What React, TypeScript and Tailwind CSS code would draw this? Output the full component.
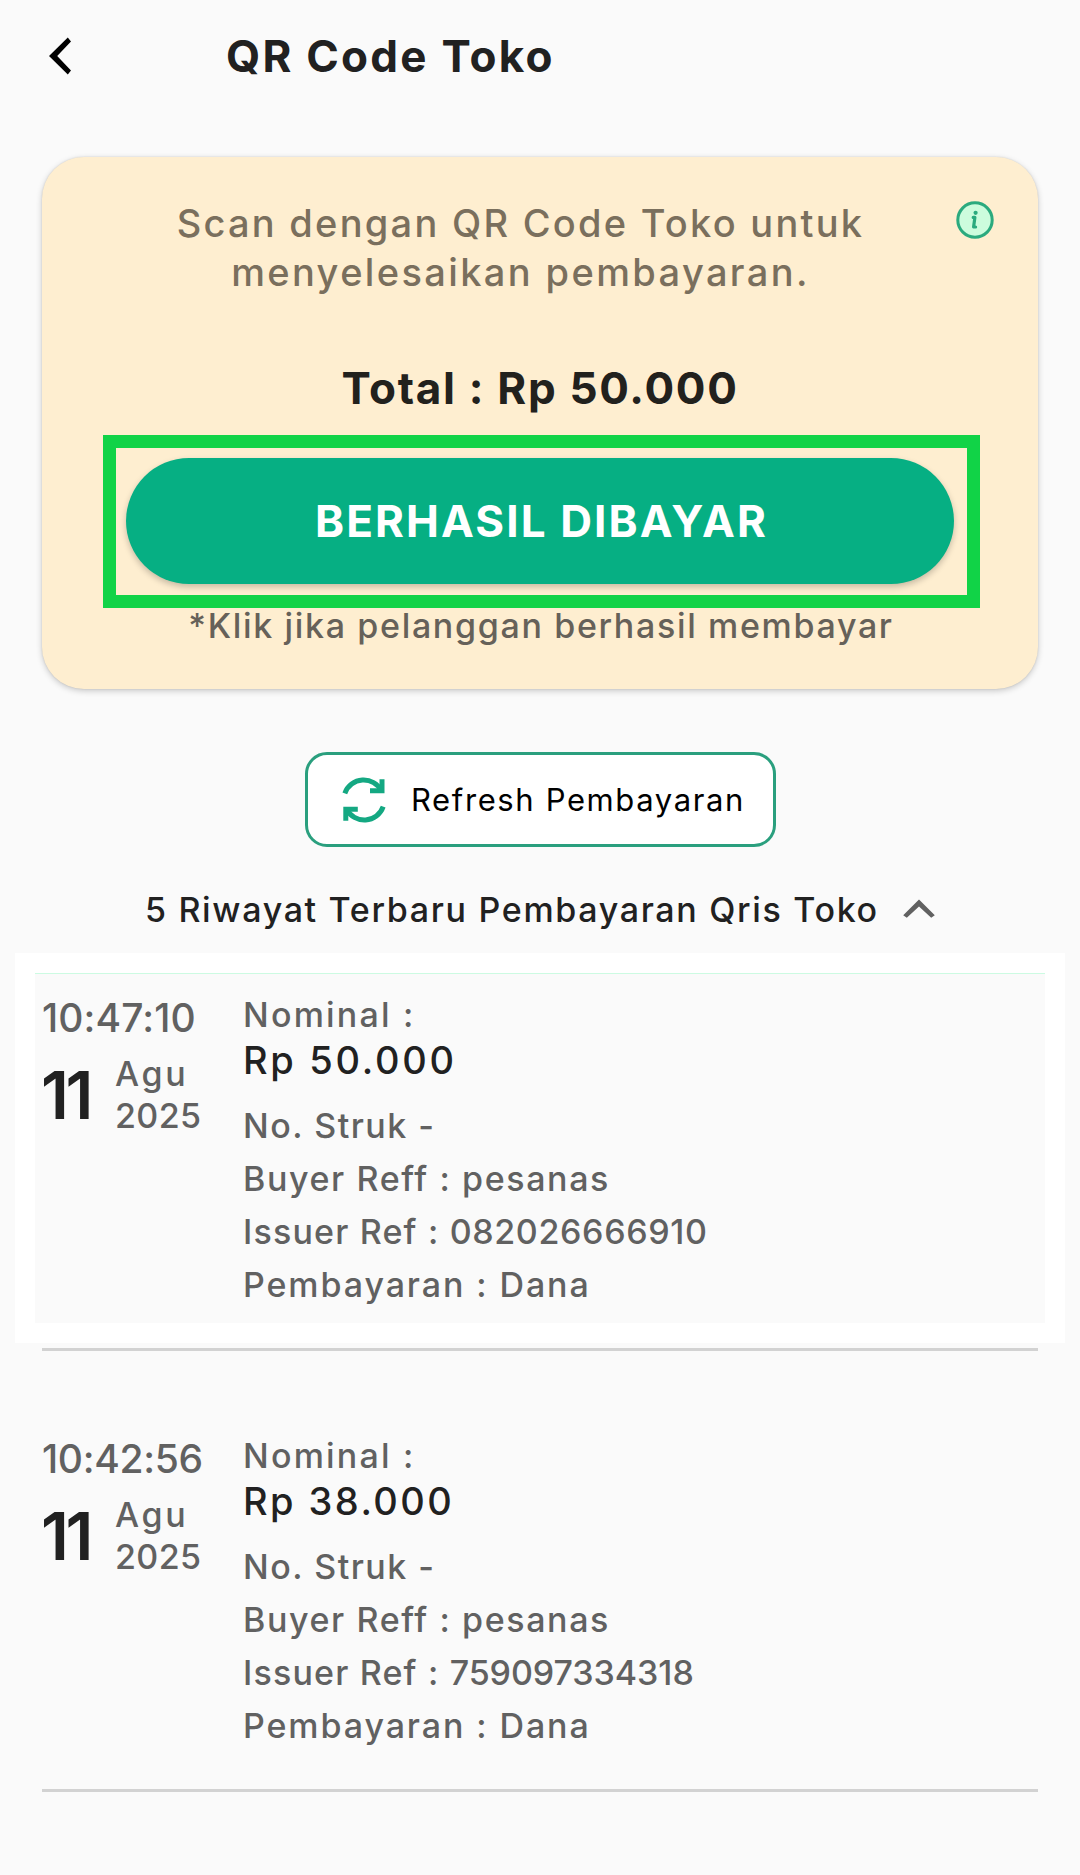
type Payment = {
  time: string;
  timeClass: string;
  amount: string;
  amountClass: string;
  issuer: string;
  issuerClass: string;
};

const payments: Payment[] = [
  {
    time: "10:47:10",
    timeClass: "tracking-[0.1px]",
    amount: "Rp 50.000",
    amountClass: "tracking-[2.7px]",
    issuer: "082026666910",
    issuerClass: "tracking-[0.64px]",
  },
  {
    time: "10:42:56",
    timeClass: "tracking-[-0.32px]",
    amount: "Rp 38.000",
    amountClass: "tracking-[2.45px]",
    issuer: "759097334318",
    issuerClass: "tracking-[-0.06px]",
  },
];

function BackIcon() {
  return (
    <svg width="22" height="38" viewBox="0 0 22 38" fill="#000">
      <path d="M0 19 18.8 .6 22 4.6 8.2 19 22 33.4 18.8 37.4Z" />
    </svg>
  );
}

function InfoIcon() {
  return (
    <svg width="38" height="38" viewBox="0 0 38 38" fill="none">
      <circle cx="19" cy="19" r="17.2" fill="#CCFCDD" stroke="#2BAA7E" strokeWidth="3" />
      <circle cx="19.6" cy="11.8" r="2.1" fill="#2BAA7E" />
      <path
        d="M17.2 16.4h1.7l-1.3 9.6h2"
        stroke="#2BAA7E"
        strokeWidth="3.2"
        strokeLinejoin="round"
        strokeLinecap="round"
      />
    </svg>
  );
}

function RefreshIcon() {
  return (
    <svg width="46" height="46" viewBox="0 0 46 46" fill="none" stroke="#14A882" strokeWidth="5">
      <path d="M3.8 16.4A20 20 0 0 1 40.5 14" />
      <path d="M41 2.2V13.7H29" />
      <path d="M42.2 29.6A20 20 0 0 1 5.5 32" />
      <path d="M4.8 43.8V32.3H16.8" />
    </svg>
  );
}

function ChevronUpIcon() {
  return (
    <svg width="32" height="20" viewBox="0 0 32 20" fill="#616161">
      <path d="M16 .4 31.8 16.2 28.2 18.8 16 7.4 3.8 18.8 .2 16.2Z" />
    </svg>
  );
}

function PaymentRow({ p }: { p: Payment }) {
  return (
    <div className="flex h-[350px] pl-[7px]">
      <div className="w-[201px] shrink-0 pt-[25px]">
        <p className={"text-[39px] leading-[40px] whitespace-nowrap " + p.timeClass}>{p.time}</p>
        <div className="mt-[14px] flex items-center gap-[28px]">
          <span className="-ml-px w-[46px] text-[66px] leading-[66px] font-semibold tracking-[-3.4px] text-[#212121]">
            11
          </span>
          <div className="pt-px leading-[42px]">
            <p className="tracking-[2.7px]">Agu</p>
            <p className="tracking-[0.4px]">2025</p>
          </div>
        </div>
      </div>
      <div className="pt-[21px] whitespace-nowrap">
        <p className="leading-[42px] tracking-[2.2px]">Nominal :</p>
        <p className={"mt-px text-[38px] leading-[46px] text-[#212121] " + p.amountClass}>{p.amount}</p>
        <div className="mt-[16px] leading-[53px]">
          <p className="tracking-[1.48px]">No. Struk -</p>
          <p className="tracking-[1.6px]">Buyer Reff : pesanas</p>
          <p className="tracking-[1.17px]">
            Issuer Ref : <span className={p.issuerClass}>{p.issuer}</span>
          </p>
          <p className="tracking-[1.9px]">Pembayaran : Dana</p>
        </div>
      </div>
    </div>
  );
}

export default function App() {
  return (
    <div className="h-[1875px] w-[1080px] overflow-hidden bg-[#fafafa] font-['Inter',sans-serif] text-[34px] font-medium text-[#616161]">
      <header className="flex h-[112px] items-center pl-[49px]">
        <BackIcon />
        <h1 className="ml-[155px] text-[44px] font-bold tracking-[2.25px] text-[#212121]">QR Code Toko</h1>
      </header>

      <section className="relative mx-[42px] mt-[45px] flex h-[532px] flex-col items-center rounded-[42px] bg-[#feeed0] pt-[42px] shadow-[0_2px_6px_rgba(0,0,0,0.2),0_0_2px_rgba(0,0,0,0.12)]">
        <p className="w-full pr-[39px] text-center text-[38px] leading-[49px] text-[#7a6f5d]">
          <span className="tracking-[2.26px]">Scan dengan QR Code Toko untuk</span>
          <br />
          <span className="tracking-[2.38px]">menyelesaikan pembayaran.</span>
        </p>
        <div className="absolute top-[44px] left-[914px]">
          <InfoIcon />
        </div>
        <p className="mt-[61px] text-[44px] leading-[60px] font-bold tracking-[1.7px] text-[#22211d]">
          Total : Rp 50.000
        </p>
        <div className="mt-[17px] ml-[3px] h-[173px] w-[877px] border-[13px] border-[#11d347] px-[10px] pt-[10px]">
          <button className="h-[126px] w-[828px] rounded-full bg-[#06af83] pl-[3px] text-[44px] font-bold tracking-[2.1px] text-white shadow-[0_3px_6px_rgba(0,0,0,0.22)]">
            BERHASIL DIBAYAR
          </button>
        </div>
        <p className="ml-[2px] leading-[36px] tracking-[1.66px] text-[#666159]">
          *Klik jika pelanggan berhasil membayar
        </p>
      </section>

      <button className="mt-[63px] ml-[305px] flex h-[95px] w-[471px] items-center rounded-[22px] border-[3px] border-[#2a9f7e] bg-white pl-[33px] text-[31px] font-normal text-black">
        <RefreshIcon />
        <span className="ml-[24px] pt-[2px] tracking-[1.62px] whitespace-nowrap">Refresh Pembayaran</span>
      </button>

      <div className="mt-[37px] flex h-[50px] items-center gap-[24px] pl-[145px] text-[#212121]">
        <span className="tracking-[1.67px] whitespace-nowrap">5 Riwayat Terbaru Pembayaran Qris Toko</span>
        <ChevronUpIcon />
      </div>

      <div className="mx-[15px] mt-[19px] border-[20px] border-white">
        <div className="bg-[#fafafa] shadow-[inset_0_1px_0_#ccfbe2]">
          <PaymentRow p={payments[0]} />
        </div>
      </div>
      <div className="mx-[42px] mt-[5px] h-[3px] bg-[#d2d2d2]" />

      <div className="mt-[63px] px-[35px]">
        <PaymentRow p={payments[1]} />
      </div>
      <div className="mx-[42px] mt-[25px] h-[3px] bg-[#d2d2d2]" />
    </div>
  );
}
